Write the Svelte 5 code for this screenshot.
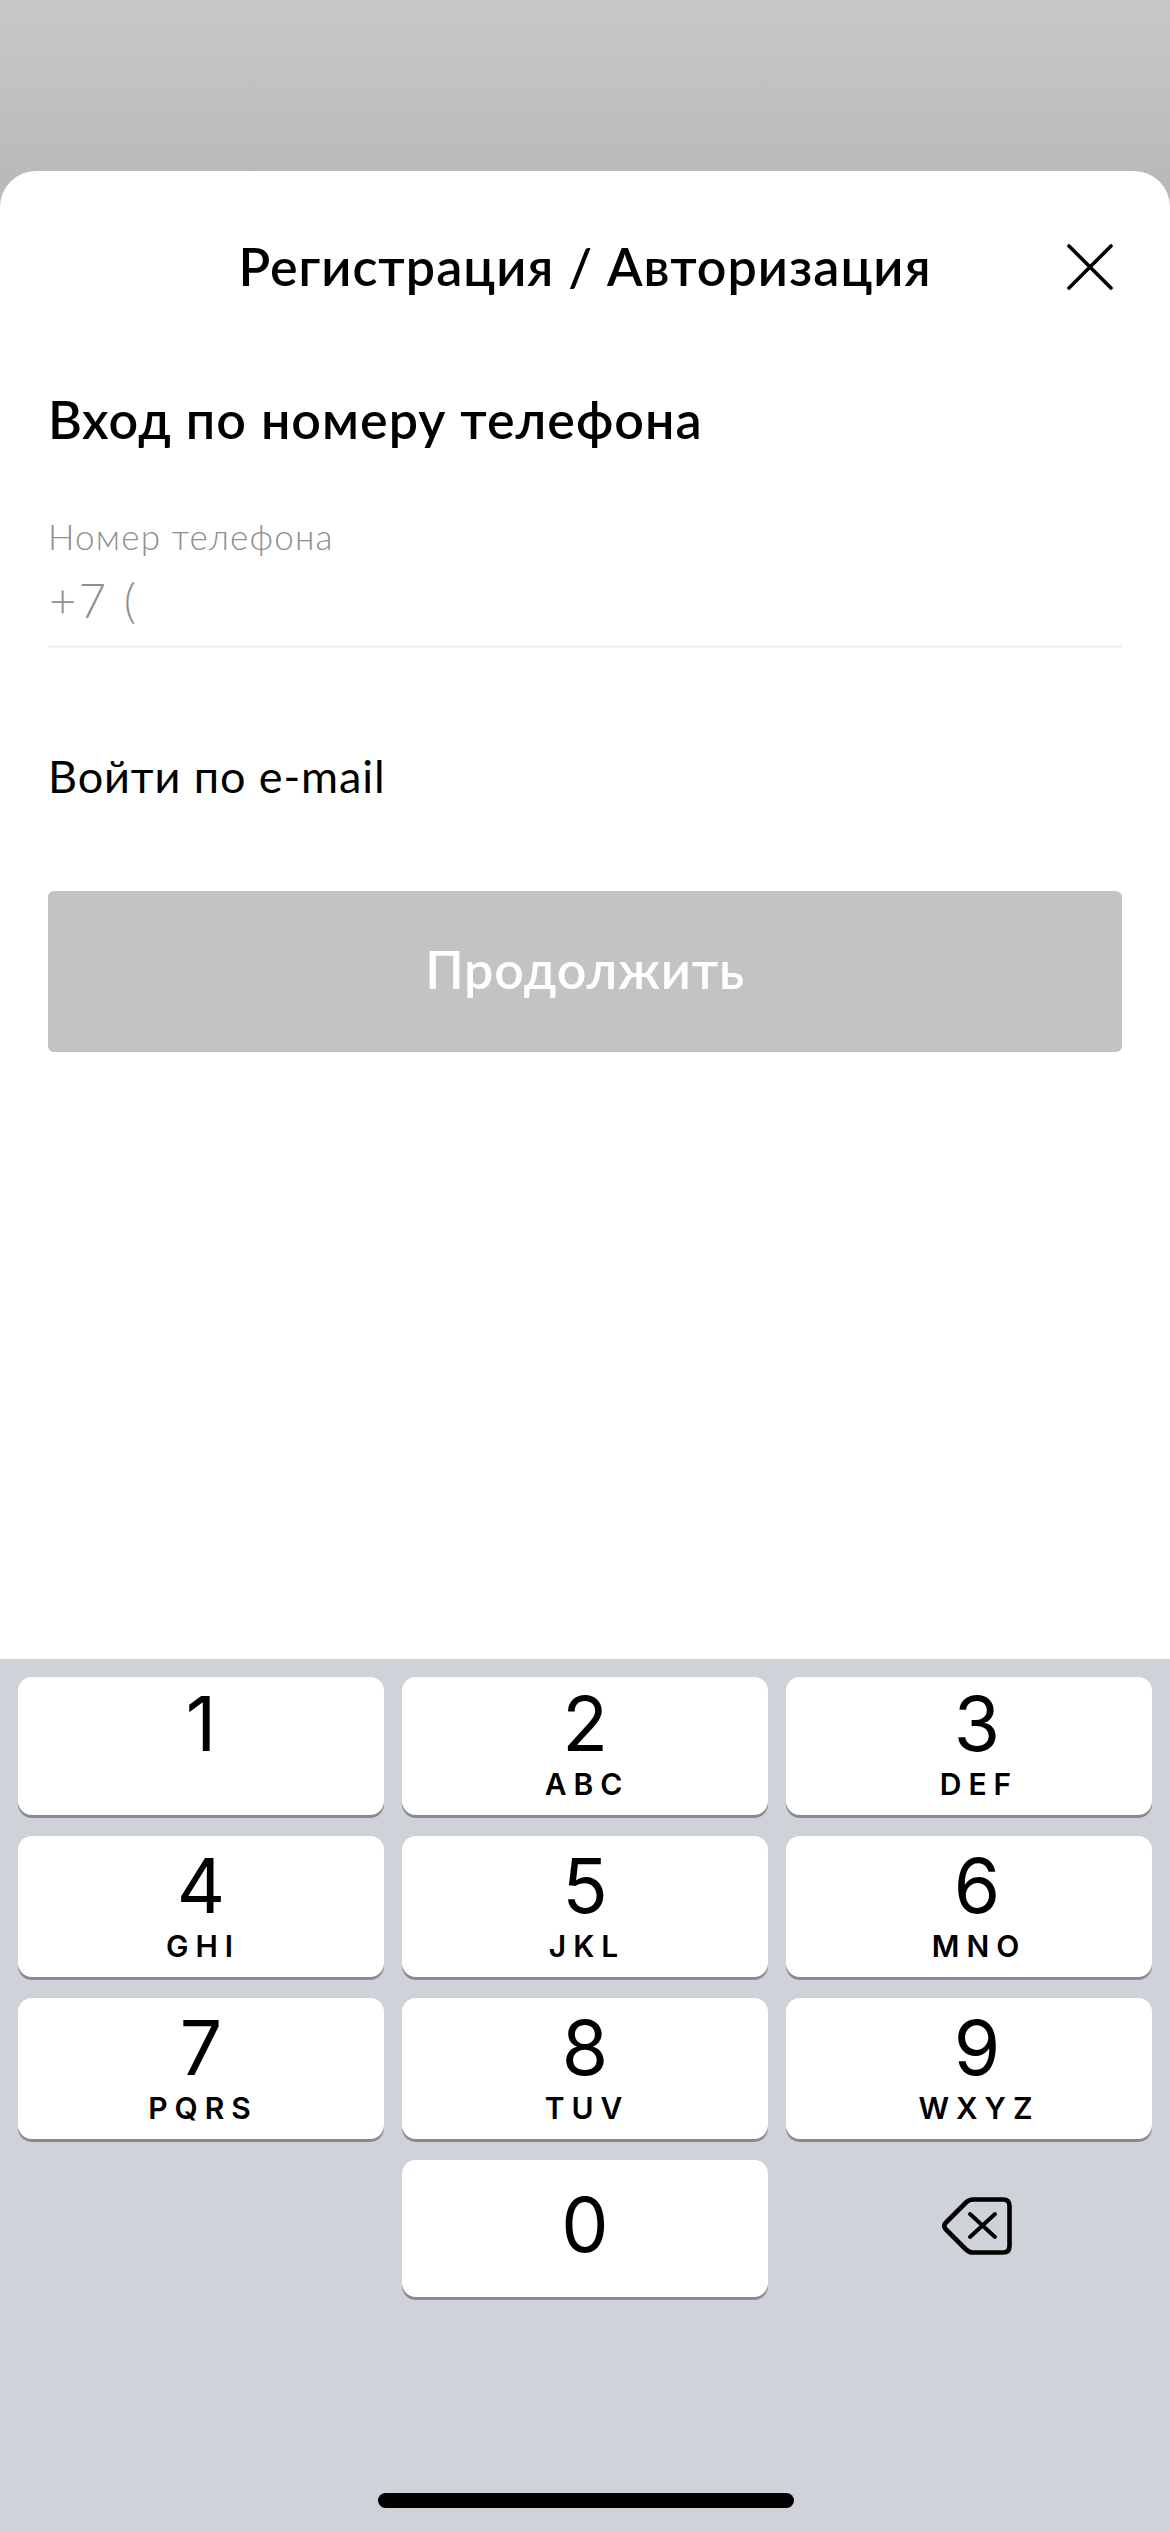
<script>
  const keys = [
    { d: '1', l: '', row: 'r1' }, { d: '2', l: 'ABC', row: 'r1' }, { d: '3', l: 'DEF', row: 'r1 c3' },
    { d: '4', l: 'GHI', row: 'r2' }, { d: '5', l: 'JKL', row: 'r2' }, { d: '6', l: 'MNO', row: 'r2 c3' },
    { d: '7', l: 'PQRS', row: 'r3' }, { d: '8', l: 'TUV', row: 'r3' }, { d: '9', l: 'WXYZ', row: 'r3 c3' }
  ];
</script>

<div class="screen">
  <section class="sheet">
    <header class="head">
      <h1>Регистрация / Авторизация</h1>
      <button class="close" aria-label="Закрыть">
        <svg viewBox="0 0 50 50" width="50" height="50"><path d="M4 4 L46 46 M46 4 L4 46" fill="none" stroke="#000" stroke-width="3.6" stroke-linecap="round"/></svg>
      </button>
    </header>
    <div class="form">
      <h2>Вход по номеру телефона</h2>
      <div class="field">
        <div class="label">Номер телефона</div>
        <div class="value">+7 (</div>
      </div>
      <div class="alt">Войти по e-mail</div>
      <button class="submit"><span class="submit-text">Продолжить</span></button>
    </div>
  </section>
  <section class="keyboard">
    <div class="grid">
      {#each keys as k}
        <div class="key {k.row}">
          <span class="digit">{k.d}</span>
          {#if k.l}<span class="letters">{k.l}</span>{/if}
        </div>
      {/each}
      <div class="spacer"></div>
      <div class="key r4"><span class="digit">0</span></div>
      <div class="back">
        <svg viewBox="0 0 70 58" width="70" height="58">
          <path d="M4 25.5 L24 5.5 Q27 2.5 31 2.5 L61 2.5 Q67.5 2.5 67.5 9 L67.5 49 Q67.5 55.5 61 55.5 L31 55.5 Q27 55.5 24 52.5 L4 32.5 Q0.5 29 4 25.5 Z" fill="none" stroke="#000" stroke-width="4.6" stroke-linejoin="round"/>
          <path d="M28 17 L53 40 M53 17 L28 40" fill="none" stroke="#000" stroke-width="4" stroke-linecap="round"/>
        </svg>
      </div>
    </div>
    <div class="home"></div>
  </section>
</div>

<style>
  :global(body) { margin: 0; }
  .screen {
    width: 1170px; height: 2532px; display: flex; flex-direction: column; overflow: hidden;
    background: linear-gradient(#c7c9c6 0, #b9bbb8 171px, #b9bbb8 100%);
    font-family: Lato, "Noto Sans", sans-serif; color: #000;
  }
  .sheet {
    margin-top: 171px; height: 1488px; box-sizing: border-box; background: #fff;
    border-radius: 36px 36px 0 0; padding: 0 48px;
  }
  .head { height: 190px; display: flex; align-items: center; justify-content: center; position: relative; }
  h1 { margin: 0; font-size: 52px; font-weight: 600; line-height: 1; letter-spacing: 1px; }
  .close { position: absolute; right: 7px; top: 71px; width: 50px; height: 50px; padding: 0; border: 0; background: none; }
  .close svg { display: block; }
  .form { display: flex; flex-direction: column; }
  h2 { margin: 0; padding-top: 28px; font-size: 52px; font-weight: 600; line-height: 60px; height: 60px; letter-spacing: 1px; }
  .field { margin-top: 66px; border-bottom: 3px solid #f2f2f2; height: 130px; }
  .label { font-size: 35px; line-height: 42px; font-weight: 300; color: #8f8f8f; letter-spacing: 1.2px; }
  .value { font-size: 47px; line-height: 52px; font-weight: 300; color: #8f8f8f; margin-top: 17px; padding-left: 1px; letter-spacing: 2.5px; }
  .alt { margin-top: 102px; font-size: 45px; line-height: 52px; letter-spacing: 0.9px; }
  .submit {
    margin-top: 89px; height: 161px; border: 0; border-radius: 6px; background: #c3c3c3; color: #fff;
    font: 600 52px/1 Lato, "Noto Sans", sans-serif; letter-spacing: 0.8px; padding: 0 0 5px;
  }
  .keyboard { flex: 1; background: #d0d2da; position: relative; padding: 18px 18px 0; }
  .grid { display: grid; grid-template-columns: repeat(3, 366px); grid-template-rows: 138px 141px 141px 137px; column-gap: 18px; row-gap: 21px; }
  .key {
    background: #fff; border-radius: 14px; box-shadow: 0 3px 0 #8a8b8e;
    display: flex; flex-direction: column; align-items: center;
    font-family: Inter, "Liberation Sans", sans-serif;
  }
  .r1 { padding-top: 9px; }
  .r2, .r3 { padding-top: 12px; }
  .r4 { padding-top: 27px; }
  .c3 { padding-left: 16px; }
  .digit { font-size: 75px; line-height: 76px; font-weight: 400; }
  .letters { font-size: 30px; line-height: 32px; font-weight: 600; letter-spacing: 7px; margin-right: -4px; margin-top: 6px; }
  .back { display: flex; align-items: center; justify-content: center; padding-left: 15px; margin-top: -6px; }
  .home { position: absolute; left: 378px; top: 834px; width: 416px; height: 15px; border-radius: 8px; background: #000; }
</style>
